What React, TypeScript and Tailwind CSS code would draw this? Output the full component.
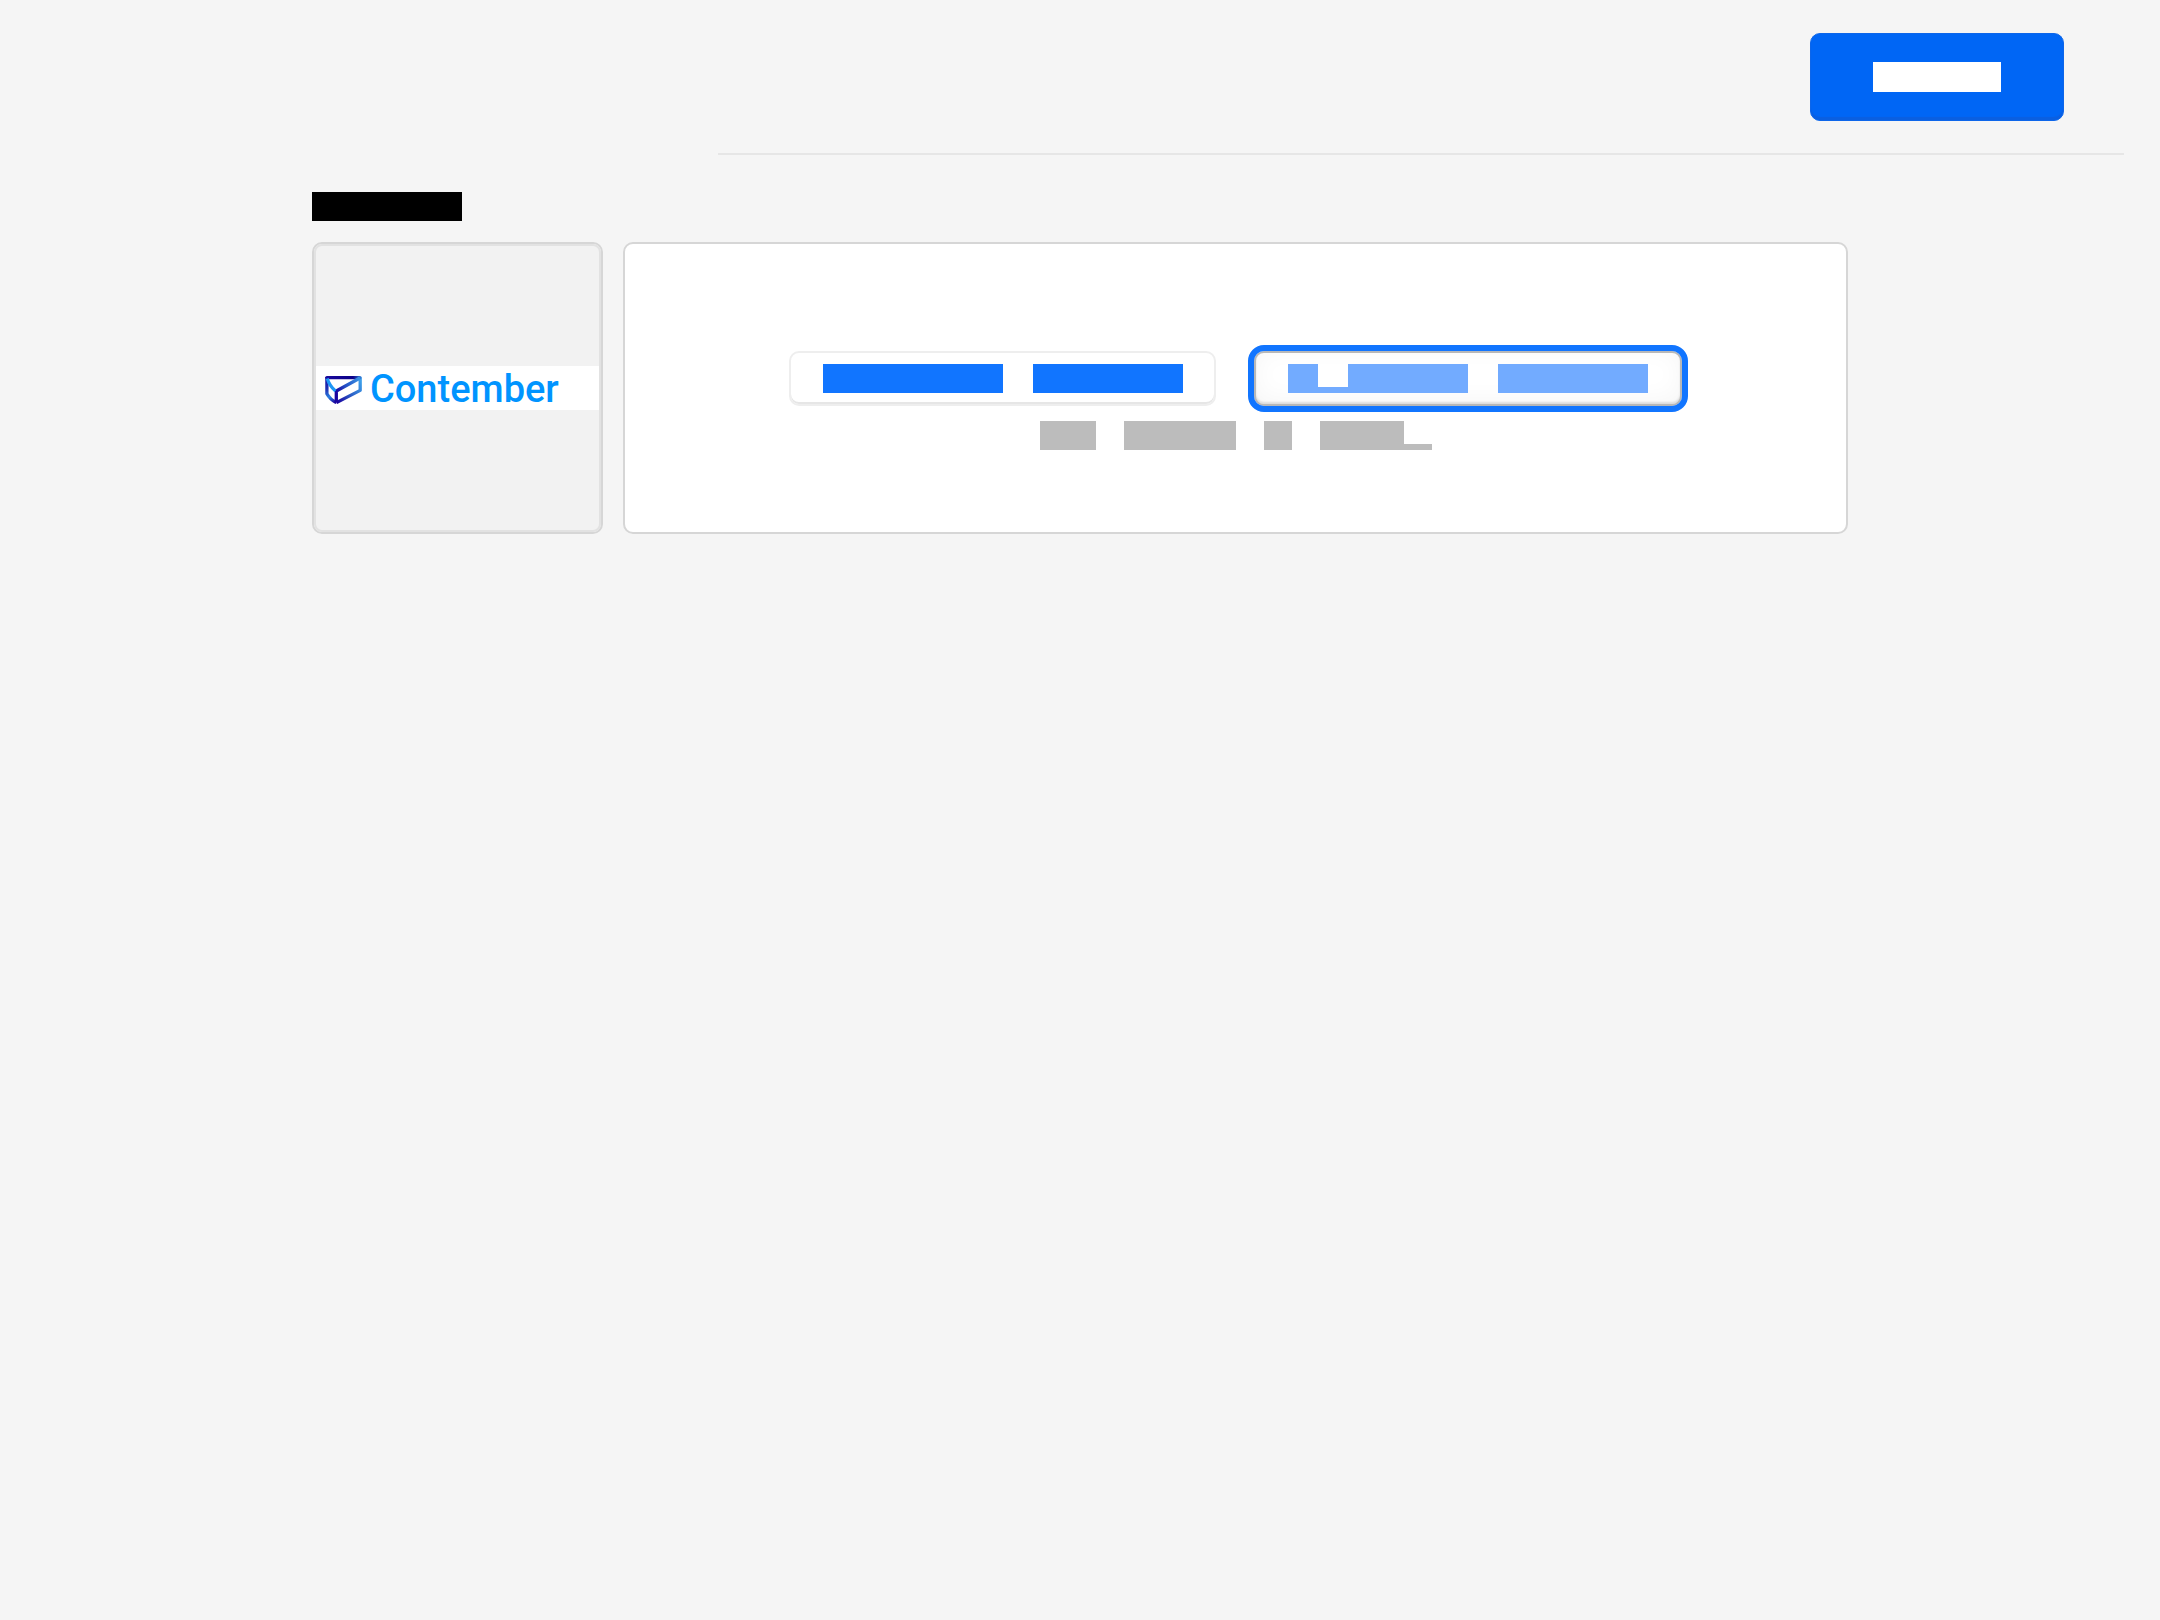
import React from "react";

function Logo() {
  return (
    <div className="flex h-11 w-full items-center bg-white pl-2">
      <svg viewBox="0 0 40 32" className="h-8 w-10 shrink-0" fill="none" aria-hidden="true">
        <defs>
          <linearGradient id="top" x1="2" y1="0" x2="38" y2="0" gradientUnits="userSpaceOnUse">
            <stop offset="0" stopColor="#1a0a9c" />
            <stop offset="0.75" stopColor="#0b0088" />
            <stop offset="1" stopColor="#3a8fe0" />
          </linearGradient>
          <linearGradient id="side" x1="12" y1="28" x2="36" y2="8" gradientUnits="userSpaceOnUse">
            <stop offset="0" stopColor="#1a04a0" />
            <stop offset="0.5" stopColor="#2c62c8" />
            <stop offset="1" stopColor="#3ea0ea" />
          </linearGradient>
          <linearGradient id="rim" x1="36" y1="6" x2="12" y2="19" gradientUnits="userSpaceOnUse">
            <stop offset="0" stopColor="#3a96e6" />
            <stop offset="0.6" stopColor="#2450c4" />
            <stop offset="1" stopColor="#1a04a0" />
          </linearGradient>
          <linearGradient id="left" x1="2" y1="4" x2="12" y2="30" gradientUnits="userSpaceOnUse">
            <stop offset="0" stopColor="#1a0a9c" />
            <stop offset="0.45" stopColor="#2030b4" />
            <stop offset="0.75" stopColor="#2a80e0" />
            <stop offset="1" stopColor="#1c08a0" />
          </linearGradient>
        </defs>
        <path d="M2.9 5V21.8Q6 27.5 12.3 30.6" stroke="url(#left)" strokeWidth="3.3" strokeLinejoin="round" />
        <path d="M12.3 30.6L36.2 18.4V5.5" stroke="url(#side)" strokeWidth="3.3" strokeLinejoin="round" />
        <path d="M2.9 5.6H36" stroke="url(#top)" strokeWidth="3.3" strokeLinecap="round" />
        <path d="M36 6L12.3 19V30" stroke="url(#rim)" strokeWidth="3.3" strokeLinejoin="round" />
        <path d="M3.2 6.5Q5.5 14 11.5 19" stroke="#1e96f5" strokeWidth="3.2" />
      </svg>
      <span className="ml-1.5 pt-0.5 font-['Roboto'] text-[38px] leading-none font-medium text-[#0094ff]">
        Contember
      </span>
    </div>
  );
}

export default function App() {
  return (
    <div className="min-h-screen bg-[#f5f5f5] font-['Inter',sans-serif]">
      <header className="mr-9 ml-[718px] flex justify-end border-b-2 border-[#e6e6e6] pt-[33px] pr-[60px] pb-8">
        <button
          type="button"
          aria-label="Save"
          className="flex h-[88px] w-[254px] items-center justify-center rounded-[10px] border border-[#0d66ea] bg-[#0066f5] shadow-[inset_0_-3px_1px_#0a5fe0]"
        >
          <span className="h-[30px] w-32 bg-white" />
        </button>
      </header>

      <main className="mx-auto mt-[37px] max-w-[1536px]">
        <div className="h-[29px] w-[150px] bg-black" />
        <div className="mt-[21px] flex gap-5">
          <div className="w-[291px] shrink-0 rounded-[10px] border-2 border-[#d6d6d6] bg-[#f5f5f5]">
            <div className="flex h-full items-center rounded-lg border-2 border-[#e2e2e2] bg-[#f2f2f2]">
              <Logo />
            </div>
          </div>

          <section className="flex flex-1 flex-col items-center gap-[15px] rounded-[10px] border-2 border-[#d6d6d6] bg-white pt-[107px] pb-[82px]">
            <div className="flex gap-[38px]">
              <button
                type="button"
                aria-label="Select file"
                className="flex h-[55px] w-[427px] items-start justify-center gap-[30px] rounded-[10px] border-2 border-[#eeeeee] bg-white pt-[11px] shadow-[inset_0_-2px_0_#e6e6e6]"
              >
                <span className="h-[29px] w-[180px] bg-[#1175ff]" />
                <span className="h-[29px] w-[150px] bg-[#1175ff]" />
              </button>
              <button
                type="button"
                aria-label="Remove file"
                className="flex h-[55px] w-[428px] items-start justify-center gap-[30px] rounded-[10px] border-2 border-[#b8b8b8] bg-white pt-[11px] shadow-[inset_0_-2px_2px_#dddddd,inset_0_-4px_24px_#f6f6f6] outline-6 outline-[#1175ff]"
              >
                <span className="flex h-[29px] items-end">
                  <span className="h-full w-[30px] bg-[#72abff]" />
                  <span className="flex h-full w-[30px] flex-col bg-[#72abff]">
                    <span className="h-[23px] bg-white" />
                  </span>
                  <span className="h-full w-[120px] bg-[#72abff]" />
                </span>
                <span className="h-[29px] w-[150px] bg-[#72abff]" />
              </button>
            </div>
            <div className="flex h-[29px] items-end gap-7">
              <span className="h-full w-14 bg-[#bcbcbc]" />
              <span className="h-full w-28 bg-[#bcbcbc]" />
              <span className="h-full w-7 bg-[#bcbcbc]" />
              <span className="flex h-full items-end">
                <span className="h-full w-[84px] bg-[#bcbcbc]" />
                <span className="h-1.5 w-7 bg-[#bcbcbc]" />
              </span>
            </div>
          </section>
        </div>
      </main>
    </div>
  );
}
